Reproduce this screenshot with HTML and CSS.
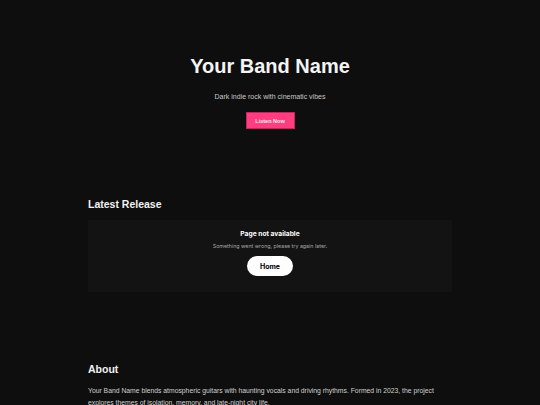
FILE: index.html
```html
<!DOCTYPE html>
<html lang="en">
<head>
<meta charset="utf-8">
<title>Your Band Name</title>
<link rel="stylesheet" href="styles.css">
</head>
<body>
<header class="hero">
  <h1 class="hero-title">Your Band Name</h1>
  <p class="hero-tagline">Dark indie rock with cinematic vibes</p>
  <a class="btn-listen" href="#">Listen Now</a>
</header>
<main class="container">
  <section class="release">
    <h2 class="section-title">Latest Release</h2>
    <div class="embed">
      <div class="embed-title">Page not available</div>
      <div class="embed-text">Something went wrong, please try again later.</div>
      <a class="embed-home" href="#">Home</a>
    </div>
  </section>
  <section class="about">
    <h2 class="section-title">About</h2>
    <p class="about-text">Your Band Name blends atmospheric guitars with haunting vocals and driving rhythms. Formed in 2023, the project explores themes of isolation, memory, and late-night city life.</p>
  </section>
</main>
</body>
</html>
```
FILE: styles.css
```css
html, body {
  margin: 0;
  padding: 0;
  background: #0e0e0e;
  color: #f2f2f2;
  font-family: "Liberation Sans", Arial, sans-serif;
}
.hero {
  display: flex;
  flex-direction: column;
  align-items: center;
  padding-top: 53px;
}
.hero-title {
  margin: 0;
  font-size: 20px;
  line-height: 26px;
  font-weight: 700;
  color: #f4f4f4;
}
.hero-tagline {
  margin: 12px 0 0;
  font-size: 7px;
  line-height: 12px;
  color: #c8c8c8;
}
.btn-listen {
  margin-top: 9px;
  display: flex;
  align-items: center;
  justify-content: center;
  box-sizing: border-box;
  width: 49px;
  height: 17px;
  background: #ff3d7f;
  border: 1px solid #b82a5c;
  color: #ffe6ee;
  font-size: 5.5px;
  font-weight: 700;
  text-decoration: none;
}
.container {
  width: 364px;
  margin: 0 auto;
}
.release {
  margin-top: 68px;
}
.section-title {
  margin: 0;
  font-size: 10.5px;
  line-height: 14px;
  font-weight: 700;
  color: #f2f2f2;
}
.embed {
  margin-top: 9px;
  height: 72px;
  box-sizing: border-box;
  background: #131313;
  display: flex;
  flex-direction: column;
  align-items: center;
  padding-top: 10px;
  font-family: Inter, "Liberation Sans", sans-serif;
}
.embed-title {
  font-size: 6.7px;
  line-height: 9px;
  font-weight: 700;
  color: #ffffff;
}
.embed-text {
  margin-top: 4px;
  font-size: 5.3px;
  line-height: 7px;
  color: #a7a7a7;
}
.embed-home {
  margin-top: 6px;
  width: 46px;
  height: 20px;
  border-radius: 10px;
  background: #ffffff;
  color: #000000;
  display: flex;
  align-items: center;
  justify-content: center;
  font-size: 7px;
  font-weight: 700;
  text-decoration: none;
}
.about {
  margin-top: 70px;
}
.about-text {
  margin: 9px 0 0;
  font-size: 6.8px;
  line-height: 12px;
  color: #d0d0d0;
}
```
